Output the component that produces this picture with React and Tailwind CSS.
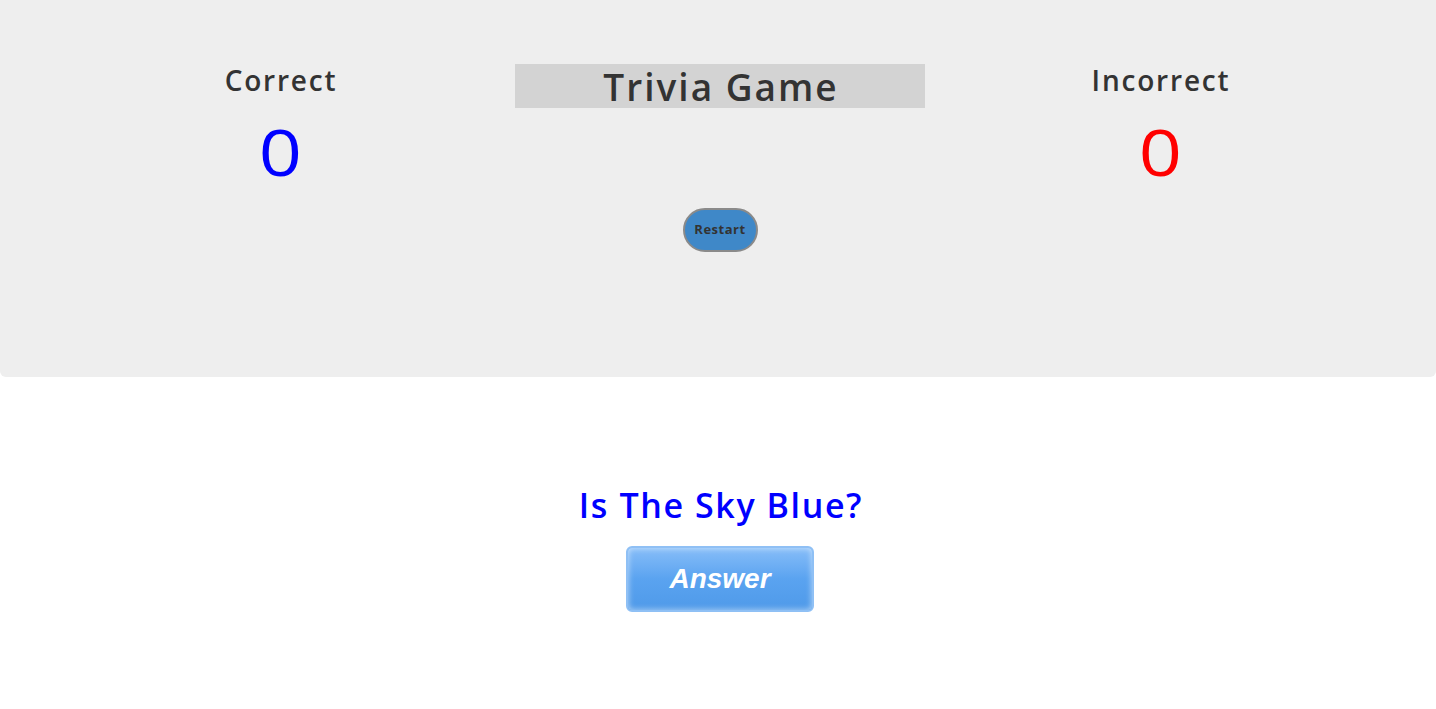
import React from 'react';

const font = { fontFamily: '"Open Sans", "Liberation Sans", sans-serif' };

const App = () => {
  return (
    <div className="min-h-[709px] bg-white" style={font}>
      <div className="bg-[#eeeeee] rounded-b-md h-[377px] pt-[62px]">
        <div className="flex justify-center pl-[4px]">
          <div className="w-[440px] flex flex-col items-center">
            <h2 className="text-[28px] leading-[36px] font-semibold tracking-[1.8px] pl-[2px] text-[#333333]">Correct</h2>
            <p className="text-[64px] leading-[72px] mt-[18px] font-medium scale-x-[1.18] text-[#0000ff]">0</p>
          </div>
          <div className="w-[440px] flex flex-col items-center">
            <h1 className="w-[410px] h-[44px] mt-[2px] pl-[2px] bg-[#d3d3d3] text-center text-[37px] leading-[46px] font-semibold tracking-[2px] text-[#333333]">
              Trivia Game
            </h1>
            <button className="mt-[100px] w-[75px] h-[44px] rounded-full bg-[#3f88c8] border-2 border-[#8a8a8a] text-[13px] font-bold tracking-[0.5px] text-[#333333]">
              Restart
            </button>
          </div>
          <div className="w-[440px] flex flex-col items-center">
            <h2 className="text-[28px] leading-[36px] font-semibold tracking-[1.8px] pl-[2px] text-[#333333]">Incorrect</h2>
            <p className="text-[64px] leading-[72px] mt-[18px] font-medium scale-x-[1.18] text-[#ff0000]">0</p>
          </div>
        </div>
      </div>
      <div className="flex flex-col items-center pt-[104px] pl-[4px]">
        <h2 className="text-[34px] leading-[48px] font-semibold tracking-[1.6px] pl-[2px] text-[#0000ff]">Is The Sky Blue?</h2>
        <button
          className="mt-[17px] w-[188px] h-[66px] rounded-md border-2 border-[#8fc0f5] bg-gradient-to-b from-[#86bdf8] via-[#5aa3f0] to-[#4f9ae9] shadow-[inset_0_0_6px_rgba(255,255,255,0.6)] text-white text-[28px] leading-[60px] font-bold italic"
          style={{ fontFamily: '"Liberation Sans", Arial, sans-serif' }}
        >
          Answer
        </button>
      </div>
    </div>
  );
};

export default App;
